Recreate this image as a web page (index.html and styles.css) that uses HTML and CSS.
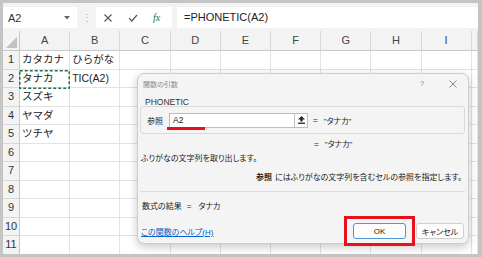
FILE: index.html
```html
<!DOCTYPE html>
<html lang="ja">
<head>
  <meta charset="UTF-8">
  <title>関数の引数 - PHONETIC</title>
  <link rel="stylesheet" href="styles.css">
</head>
<body>
  <div class="frame">
    <div class="toolbar">
      <div class="namebox">
        <span>A2</span>
        <svg width="6" height="4" viewBox="0 0 6 4"><path d="M0 0 H6 L3 3.5 Z" fill="#666"/></svg>
      </div>
      <div class="grip">⋮</div>
      <div class="fxbox">
        <svg class="ico" width="10" height="10" viewBox="0 0 10 10"><path d="M1.5 1.5 L8.5 8.5 M8.5 1.5 L1.5 8.5" stroke="#555" stroke-width="1.1" fill="none"/></svg>
        <svg class="ico" width="10" height="10" viewBox="0 0 10 10"><path d="M1 5.2 L3.8 8 L9 2" stroke="#555" stroke-width="1.2" fill="none"/></svg>
        <i class="fx">fx</i>
      </div>
      <div class="formula">=PHONETIC(A2)</div>
    </div>

    <div class="sheet">
      <div class="corner"></div>
      <div class="h">A</div><div class="h">B</div><div class="h">C</div><div class="h">D</div><div class="h">E</div>
      <div class="h">F</div><div class="h">G</div><div class="h">H</div><div class="h">I</div><div class="h"></div>

      <div class="r">1</div><div class="c">カタカナ</div><div class="c">ひらがな</div>
      <div class="c"></div><div class="c"></div><div class="c"></div><div class="c"></div><div class="c"></div><div class="c"></div><div class="c"></div><div class="c"></div>

      <div class="r">2</div>
      <div class="c copied">タナカ
        <svg class="ants" width="51" height="19" viewBox="0 0 51 19"><rect x="0.75" y="0.75" width="49.5" height="17.5" fill="none" stroke="#217346" stroke-width="1.5" stroke-dasharray="3 2"/></svg>
      </div>
      <div class="c">TIC(A2)</div>
      <div class="c"></div><div class="c"></div><div class="c"></div><div class="c"></div><div class="c"></div><div class="c"></div><div class="c"></div><div class="c"></div>

      <div class="r">3</div><div class="c">スズキ</div><div class="c"></div>
      <div class="c"></div><div class="c"></div><div class="c"></div><div class="c"></div><div class="c"></div><div class="c"></div><div class="c"></div><div class="c"></div>

      <div class="r">4</div><div class="c">ヤマダ</div><div class="c"></div>
      <div class="c"></div><div class="c"></div><div class="c"></div><div class="c"></div><div class="c"></div><div class="c"></div><div class="c"></div><div class="c"></div>

      <div class="r">5</div><div class="c">ツチヤ</div><div class="c"></div>
      <div class="c"></div><div class="c"></div><div class="c"></div><div class="c"></div><div class="c"></div><div class="c"></div><div class="c"></div><div class="c"></div>

      <div class="r">6</div><div class="c"></div><div class="c"></div>
      <div class="c"></div><div class="c"></div><div class="c"></div><div class="c"></div><div class="c"></div><div class="c"></div><div class="c"></div><div class="c"></div>

      <div class="r">7</div><div class="c"></div><div class="c"></div>
      <div class="c"></div><div class="c"></div><div class="c"></div><div class="c"></div><div class="c"></div><div class="c"></div><div class="c"></div><div class="c"></div>

      <div class="r">8</div><div class="c"></div><div class="c"></div>
      <div class="c"></div><div class="c"></div><div class="c"></div><div class="c"></div><div class="c"></div><div class="c"></div><div class="c"></div><div class="c"></div>

      <div class="r">9</div><div class="c"></div><div class="c"></div>
      <div class="c"></div><div class="c"></div><div class="c"></div><div class="c"></div><div class="c"></div><div class="c"></div><div class="c"></div><div class="c"></div>

      <div class="r">10</div><div class="c"></div><div class="c"></div>
      <div class="c"></div><div class="c"></div><div class="c"></div><div class="c"></div><div class="c"></div><div class="c"></div><div class="c"></div><div class="c"></div>

      <div class="r">11</div><div class="c"></div><div class="c"></div>
      <div class="c"></div><div class="c"></div><div class="c"></div><div class="c"></div><div class="c"></div><div class="c"></div><div class="c"></div><div class="c"></div>

      <div class="r">12</div><div class="c"></div><div class="c"></div>
      <div class="c"></div><div class="c"></div><div class="c"></div><div class="c"></div><div class="c"></div><div class="c"></div><div class="c"></div><div class="c"></div>
    </div>

    <!-- function arguments dialog -->
    <div class="dialog">
      <div class="dlg-title">
        <span>関数の引数</span>
        <span class="dlg-ctrl">
          <span class="help">?</span>
          <svg width="8" height="8" viewBox="0 0 8 8"><path d="M0.5 0.5 L7.5 7.5 M7.5 0.5 L0.5 7.5" stroke="#7a7a7a" stroke-width="0.9" fill="none"/></svg>
        </span>
      </div>
      <div class="dlg-body">
        <div class="fn-name">PHONETIC</div>
        <div class="arg-box">
          <span class="arg-label">参照</span>
          <div class="arg-input">
            <span class="arg-val">A2</span>
            <span class="collapse">
              <svg width="7" height="8" viewBox="0 0 7 8"><path d="M3.5 0 L7 3.6 H4.6 V5.6 H2.4 V3.6 H0 Z" fill="#222"/><rect x="0" y="6.6" width="7" height="1.3" fill="#222"/></svg>
            </span>
            <span class="red-line"></span>
          </div>
          <span class="arg-eq">=</span>
          <span>"タナカ"</span>
        </div>
        <div class="result-line"><span class="arg-eq">=</span><span>"タナカ"</span></div>
        <p class="desc">ふりがなの文字列を取り出します。</p>
        <p class="arg-desc"><b>参照</b>にはふりがなの文字列を含むセルの参照を指定します。</p>
        <hr>
        <div class="formula-result">数式の結果<span class="res-eq">=</span>タナカ</div>
        <div class="dlg-foot">
          <a href="#" class="help-link">この関数のヘルプ(H)</a>
          <div class="btns">
            <button class="btn ok">OK</button>
            <button class="btn">キャンセル</button>
          </div>
        </div>
      </div>
    </div>

    <div class="mark"></div>
  </div>
</body>
</html>
```

FILE: styles.css
```css
* {
  box-sizing: border-box;
}

body {
  margin: 0;
  background: #fff;
}

.frame {
  position: relative;
  width: 482px;
  height: 257px;
  border: 3px solid #c4c4c4;
  border-right-width: 4px;
  overflow: hidden;
  background: #fff;
  font-family: "Liberation Sans", "Noto Sans CJK JP", sans-serif;
  color: #222;
}

/* formula bar */
.toolbar {
  display: flex;
  align-items: center;
  height: 28px;
  padding: 4px 0 3px;
  background: #f3f3f3;
}

.namebox {
  width: 74px;
  height: 21px;
  display: flex;
  align-items: center;
  justify-content: space-between;
  padding: 0 7px 0 5px;
  background: #fff;
  font-size: 11px;
  color: #333;
}

.grip {
  width: 19px;
  text-align: center;
  font-size: 10px;
  color: #b0b0b0;
}

.fxbox {
  width: 76px;
  height: 21px;
  display: flex;
  align-items: center;
  gap: 15px;
  padding-left: 7px;
  background: #fff;
}

.fxbox .ico {
  width: 10px;
}

.fx {
  width: 10px;
  font-family: "Liberation Serif", serif;
  font-size: 10px;
  color: #217346;
}

.formula {
  flex: 1;
  height: 21px;
  margin-left: 5px;
  padding-left: 7px;
  background: #fff;
  font-size: 11px;
  line-height: 21px;
  color: #222;
}

/* sheet grid */
.sheet {
  display: grid;
  grid-template-columns: 17px repeat(9, 50.2px) 1fr;
  grid-template-rows: 20px;
  grid-auto-rows: 18.5px;
  font-size: 10.5px;
}

.corner {
  position: relative;
  background: #f3f3f3;
  border-right: 1px solid #c8c8c8;
  border-bottom: 1px solid #c8c8c8;
}

.corner::after {
  content: "";
  position: absolute;
  right: 2px;
  bottom: 2px;
  border-left: 11px solid transparent;
  border-bottom: 11px solid #c2c2c2;
}

.h {
  background: #f3f3f3;
  border-right: 1px solid #d8d8d8;
  border-bottom: 1px solid #c8c8c8;
  text-align: center;
  line-height: 19px;
  font-size: 11px;
  color: #444;
}

.r {
  background: #f3f3f3;
  border-right: 1px solid #c8c8c8;
  border-bottom: 1px solid #d8d8d8;
  text-align: center;
  line-height: 17.5px;
  font-size: 11px;
  color: #333;
}

.c {
  border-right: 1px solid #e2e2e2;
  border-bottom: 1px solid #e2e2e2;
  padding-left: 2px;
  line-height: 17.5px;
  white-space: nowrap;
}

.copied {
  position: relative;
}

.ants {
  position: absolute;
  left: -1px;
  top: 0;
}

/* dialog */
.dialog {
  position: absolute;
  left: 134px;
  top: 70px;
  width: 332px;
  height: 171px;
  background: #f4f4f4;
  border: 1px solid #cdcdcd;
  border-radius: 7px;
  box-shadow: 0 3px 10px rgba(0, 0, 0, 0.22);
  font-size: 8px;
  font-feature-settings: "palt";
  color: #1a1a1a;
}

.dlg-title {
  height: 19px;
  display: flex;
  align-items: center;
  justify-content: space-between;
  padding: 0 11px 0 5px;
  font-size: 7px;
  color: #8a8a8a;
}

.dlg-ctrl {
  display: flex;
  align-items: center;
  gap: 23px;
}

.help {
  width: 8px;
  text-align: center;
  font-size: 8px;
  color: #8a8a8a;
}

.dlg-body {
  padding: 0 3px 0 2px;
}

.fn-name {
  margin-top: 5px;
  padding-left: 5px;
  font-size: 8.5px;
  line-height: 9px;
  color: #333;
}

.arg-box {
  margin-top: -1px;
  height: 28px;
  display: flex;
  align-items: center;
  padding-left: 6px;
  border: 1px solid #dadada;
  border-radius: 3px;
}

.arg-label {
  width: 22px;
}

.arg-input {
  position: relative;
  width: 139px;
  height: 15px;
  display: flex;
  background: #fff;
  border: 1px solid #bdbdbd;
}

.arg-val {
  flex: 1;
  padding-left: 3px;
  font-size: 8.5px;
  line-height: 13px;
}

.collapse {
  width: 13px;
  display: flex;
  align-items: center;
  justify-content: center;
  border-left: 1px solid #bdbdbd;
}

.red-line {
  position: absolute;
  left: -3px;
  top: 13px;
  width: 38px;
  height: 3px;
  background: #e8101c;
}

.arg-eq {
  margin: 0 6px 0 5px;
}

.result-line {
  margin-top: 4px;
  padding-left: 169px;
  line-height: 14px;
}

.desc {
  margin: 0;
  padding-left: 1px;
  line-height: 14px;
}

.arg-desc {
  margin: 5px 3px 0 0;
  text-align: right;
  line-height: 14px;
}

.arg-desc b {
  margin-right: 3px;
}

hr {
  margin: 6px 0 0;
  border: 0;
  border-top: 1px solid #dcdcdc;
}

.formula-result {
  margin-top: 8px;
  padding-left: 2px;
  line-height: 14px;
}

.res-eq {
  margin: 0 7px 0 5px;
}

.dlg-foot {
  margin-top: 9px;
  display: flex;
  align-items: center;
  justify-content: space-between;
  padding-right: 1px;
}

.help-link {
  padding-left: 1px;
  color: #0a62c9;
  text-decoration: underline;
}

.btns {
  display: flex;
  gap: 10px;
}

.btn {
  width: 48px;
  height: 16px;
  padding: 0;
  background: #fdfdfd;
  border: 1px solid #cfcfcf;
  border-radius: 3px;
  font-family: inherit;
  font-size: 8px;
  font-feature-settings: "palt";
  color: #1a1a1a;
}

.btn.ok {
  width: 53px;
  border-color: #4f94dc;
}

/* red highlight around the OK button */
.mark {
  position: absolute;
  left: 341px;
  top: 213px;
  width: 71px;
  height: 30px;
  border: 3px solid #e8101c;
}
```
